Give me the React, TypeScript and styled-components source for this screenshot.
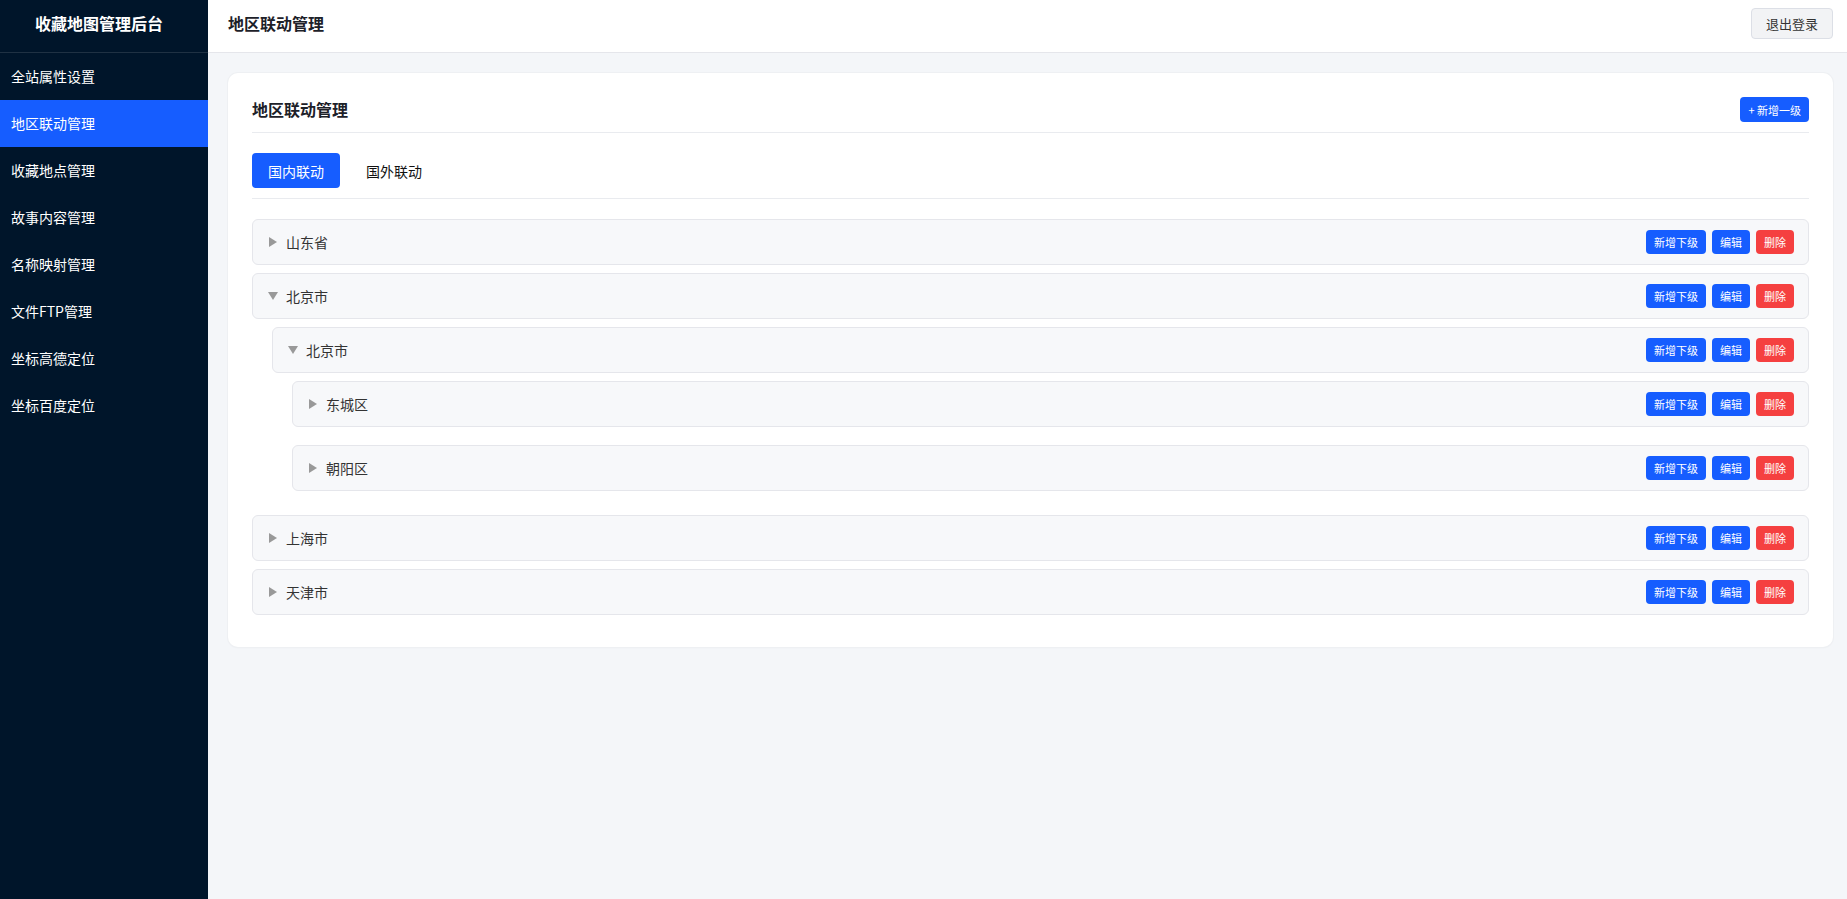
import React from "react";
import styled, { createGlobalStyle } from "styled-components";

const GlobalStyle = createGlobalStyle`
  html, body { margin: 0; padding: 0; }
  body {
    font-family: "Noto Sans CJK SC", "Noto Sans", sans-serif;
    background: #f4f6f9;
    color: #1d2129;
  }
  * { box-sizing: border-box; }
`;

const Layout = styled.div`
  display: flex;
  min-height: 100vh;
`;

const Sidebar = styled.aside`
  width: 208px;
  flex: 0 0 208px;
  background: #00152a;
  color: #fff;
  display: flex;
  flex-direction: column;
`;

const Brand = styled.div`
  height: 53px;
  padding: 0 10px 6px 0;
  display: flex;
  align-items: center;
  justify-content: center;
  font-size: 16px;
  font-weight: 700;
  border-bottom: 1px solid rgba(255, 255, 255, 0.12);
`;

const Menu = styled.nav`
  display: flex;
  flex-direction: column;
`;

const MenuItem = styled.div<{ $active?: boolean }>`
  height: 47px;
  display: flex;
  align-items: center;
  padding: 0 0 1px 11px;
  font-size: 14px;
  color: #fff;
  background: ${(p) => (p.$active ? "#165dff" : "transparent")};
`;

const Main = styled.div`
  flex: 1;
  display: flex;
  flex-direction: column;
  min-width: 0;
`;

const TopBar = styled.header`
  height: 53px;
  padding: 0 14px 6px 20px;
  display: flex;
  align-items: center;
  justify-content: space-between;
  background: #fff;
  border-bottom: 1px solid #e5e6eb;
`;

const TopTitle = styled.div`
  font-size: 16px;
  font-weight: 600;
  color: #1d2129;
`;

const LogoutBtn = styled.button`
  height: 31px;
  padding: 0 14px;
  font-family: inherit;
  font-size: 13px;
  color: #333;
  background: #f2f3f5;
  border: 1px solid #dcdfe6;
  border-radius: 4px;
`;

const Content = styled.main`
  padding: 20px 14px 20px 20px;
`;

const Card = styled.section`
  background: #fff;
  border-radius: 10px;
  padding: 24px;
  box-shadow: 0 0 0 1px #eef0f3, 0 1px 2px rgba(0, 0, 0, 0.04);
`;

const CardHeader = styled.div`
  display: flex;
  align-items: center;
  justify-content: space-between;
  padding-bottom: 10px;
  border-bottom: 1px solid #e9ebef;
`;

const CardTitle = styled.h2`
  margin: 0;
  font-size: 16px;
  font-weight: 600;
  color: #1d2129;
  line-height: 25px;
`;

const SmallBtn = styled.button<{ $variant?: "primary" | "danger" }>`
  height: 24px;
  padding: 0 8px;
  font-family: inherit;
  font-size: 11px;
  color: #fff;
  border: none;
  border-radius: 4px;
  white-space: nowrap;
  background: ${(p) => (p.$variant === "danger" ? "#f54040" : "#165dff")};
`;

const AddTopBtn = styled(SmallBtn)`
  height: 25px;
`;

const Tabs = styled.div`
  display: flex;
  gap: 10px;
  margin-top: 20px;
  padding-bottom: 10px;
  border-bottom: 1px solid #e9ebef;
  margin-bottom: 20px;
`;

const Tab = styled.button<{ $active?: boolean }>`
  height: 35px;
  padding: 0 16px;
  font-family: inherit;
  font-size: 14px;
  border: none;
  border-radius: 4px;
  background: ${(p) => (p.$active ? "#165dff" : "transparent")};
  color: ${(p) => (p.$active ? "#fff" : "#111")};
`;

const TreeRoot = styled.div`
  display: flex;
  flex-direction: column;
`;

const NodeBox = styled.div`
  display: flex;
  flex-direction: column;
  margin-bottom: 8px;
`;

const ChildList = styled.div`
  display: flex;
  flex-direction: column;
  gap: 10px;
  margin: 8px 0 0 20px;
`;

const Row = styled.div`
  height: 46px;
  display: flex;
  align-items: center;
  justify-content: space-between;
  padding: 0 14px 0 15px;
  background: #f7f8fa;
  border: 1px solid #e5e6eb;
  border-radius: 6px;
`;

const Label = styled.div`
  display: flex;
  align-items: center;
  gap: 8px;
  font-size: 14px;
  color: #333;
`;

const Caret = styled.span<{ $open?: boolean }>`
  width: 10px;
  height: 10px;
  display: flex;
  align-items: center;
  justify-content: center;
  &::before {
    content: "";
    display: block;
    width: 0;
    height: 0;
    ${(p) =>
      p.$open
        ? `border-left: 5px solid transparent; border-right: 5px solid transparent; border-top: 8px solid #999;`
        : `border-top: 5px solid transparent; border-bottom: 5px solid transparent; border-left: 8px solid #999; margin-left: -1px;`}
  }
`;

const Actions = styled.div`
  display: flex;
  gap: 6px;
`;

type Node = { name: string; open?: boolean; children?: Node[] };

const tree: Node[] = [
  { name: "山东省" },
  {
    name: "北京市",
    open: true,
    children: [
      {
        name: "北京市",
        open: true,
        children: [{ name: "东城区" }, { name: "朝阳区" }],
      },
    ],
  },
  { name: "上海市" },
  { name: "天津市" },
];

const TreeNode: React.FC<{ node: Node }> = ({ node }) => (
  <NodeBox>
    <Row>
      <Label>
        <Caret $open={node.open} />
        <span>{node.name}</span>
      </Label>
      <Actions>
        <SmallBtn>新增下级</SmallBtn>
        <SmallBtn>编辑</SmallBtn>
        <SmallBtn $variant="danger">删除</SmallBtn>
      </Actions>
    </Row>
    {node.open && node.children && (
      <ChildList>
        {node.children.map((c, i) => (
          <TreeNode key={i} node={c} />
        ))}
      </ChildList>
    )}
  </NodeBox>
);

const menu = [
  "全站属性设置",
  "地区联动管理",
  "收藏地点管理",
  "故事内容管理",
  "名称映射管理",
  "文件FTP管理",
  "坐标高德定位",
  "坐标百度定位",
];

export default function App() {
  return (
    <>
      <GlobalStyle />
      <Layout>
        <Sidebar>
          <Brand>收藏地图管理后台</Brand>
          <Menu>
            {menu.map((m) => (
              <MenuItem key={m} $active={m === "地区联动管理"}>
                {m}
              </MenuItem>
            ))}
          </Menu>
        </Sidebar>
        <Main>
          <TopBar>
            <TopTitle>地区联动管理</TopTitle>
            <LogoutBtn>退出登录</LogoutBtn>
          </TopBar>
          <Content>
            <Card>
              <CardHeader>
                <CardTitle>地区联动管理</CardTitle>
                <AddTopBtn>+ 新增一级</AddTopBtn>
              </CardHeader>
              <Tabs>
                <Tab $active>国内联动</Tab>
                <Tab>国外联动</Tab>
              </Tabs>
              <TreeRoot>
                {tree.map((n, i) => (
                  <TreeNode key={i} node={n} />
                ))}
              </TreeRoot>
            </Card>
          </Content>
        </Main>
      </Layout>
    </>
  );
}
